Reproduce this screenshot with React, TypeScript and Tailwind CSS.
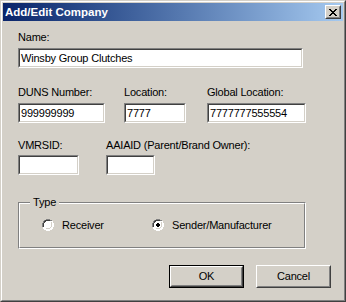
import React from "react";

const font = { fontFamily: '"Liberation Sans", Arial, sans-serif' };

function Sunken({ w, value }: { w: string; value?: string }) {
  return (
    <div className={`${w} h-[20px] border border-t-[#808080] border-l-[#808080] border-r-white border-b-white`}>
      <div className="h-full border border-t-[#404040] border-l-[#404040] border-r-[#d4d0c8] border-b-[#d4d0c8] bg-white pl-[1px] text-[11px] leading-[16px] text-black">
        {value}
      </div>
    </div>
  );
}

function Radio({ checked }: { checked?: boolean }) {
  return (
    <svg width="12" height="12" viewBox="0 0 12 12" className="shrink-0">
      <path d="M4 0h4v1h2v1h1v2h1v4h-1v2h-1v1h-2v1h-4v-1h-2v-1h-1v-2h-1v-4h1v-2h1v-1h2z" fill="#ffffff" />
      <path d="M4 0h4v1h2v1h-2v-1h-4v1h-2v2h-1v4h-1v-4h1v-2h1v-1h2z" fill="#808080" />
      <path d="M4 1h4v1h-4v1h-1v1h-1v4h-1v-4h1v-2h1v-1z" fill="#404040" />
      <path d="M10 2h1v2h1v4h-1v2h-1v1h-2v1h-4v-1h4v-1h2v-2h1v-4h-1z" fill="#ffffff" />
      <path d="M9 3h1v1h0v4h-1v1h-1v1h-4v-1h4v-1h1v-4z" fill="#d4d0c8" />
      {checked && <path d="M5 4h2v1h1v2h-1v1h-2v-1h-1v-2h1z" fill="#000000" />}
    </svg>
  );
}

function Button({ label, def }: { label: string; def?: boolean }) {
  const inner = (
    <div className="h-full border border-t-white border-l-white border-r-[#404040] border-b-[#404040]">
      <div className="h-full border border-t-[#d4d0c8] border-l-[#d4d0c8] border-r-[#808080] border-b-[#808080] flex items-center justify-center text-[11px] text-black">
        {label}
      </div>
    </div>
  );
  return def ? (
    <div className="w-[75px] h-[23px] border border-black">{inner}</div>
  ) : (
    <div className="w-[75px] h-[23px]">{inner}</div>
  );
}

export default function App() {
  return (
    <div style={font} className="w-[346px] h-[302px] bg-[#d4d0c8]">
      <div className="w-full h-full border border-t-[#d4d0c8] border-l-[#d4d0c8] border-r-[#404040] border-b-[#404040]">
        <div className="w-full h-full border border-t-white border-l-white border-r-[#808080] border-b-[#808080] p-[1px] flex flex-col">
          {/* title bar */}
          <div className="h-[18px] flex items-center justify-between bg-gradient-to-r from-[#0a246a] to-[#a6caf0] pl-[2px] pr-[2px]">
            <span className="text-white font-bold text-[11.5px] leading-[18px]">Add/Edit Company</span>
            <div className="w-[16px] h-[14px] border border-t-white border-l-white border-r-[#404040] border-b-[#404040]">
              <div className="w-full h-full bg-[#d4d0c8] border border-t-[#d4d0c8] border-l-[#d4d0c8] border-r-[#808080] border-b-[#808080] flex items-center justify-center">
                <svg width="8" height="7" viewBox="0 0 8 7">
                  <path d="M0 0h2v1h1v1h2v-1h1v-1h2v1h-1v1h-1v1h-1v1h1v1h1v1h1v1h-2v-1h-1v-1h-2v1h-1v1h-2v-1h1v-1h1v-1h1v-1h-1v-1h-1v-1h-1z" fill="#000" />
                </svg>
              </div>
            </div>
          </div>

          {/* body */}
          <div className="flex-1 pl-[15px] text-[11px] leading-[13px] tracking-[-0.2px] text-black">
            <div className="mt-[10px]">Name:</div>
            <div className="mt-[4px]">
              <Sunken w="w-[285px]" value="Winsby Group Clutches" />
            </div>

            <div className="mt-[18px] flex">
              <div className="w-[106px]">
                <div>DUNS Number:</div>
                <div className="mt-[4px]"><Sunken w="w-[87px]" value="999999999" /></div>
              </div>
              <div className="w-[83px]">
                <div>Location:</div>
                <div className="mt-[4px]"><Sunken w="w-[62px]" value="7777" /></div>
              </div>
              <div>
                <div>Global Location:</div>
                <div className="mt-[4px]"><Sunken w="w-[99px]" value="7777777555554" /></div>
              </div>
            </div>

            <div className="mt-[16px] flex">
              <div className="w-[88px]">
                <div>VMRSID:</div>
                <div className="mt-[3px]"><Sunken w="w-[61px]" /></div>
              </div>
              <div>
                <div>AAIAID (Parent/Brand Owner):</div>
                <div className="mt-[3px]"><Sunken w="w-[49px]" /></div>
              </div>
            </div>

            {/* group box */}
            <div className="relative mt-[27px] w-[288px] h-[47px] border border-t-[#808080] border-l-[#808080] border-r-white border-b-white">
              <div className="h-full border border-t-white border-l-white border-r-[#808080] border-b-[#808080] pl-[22px] pt-[15px] flex items-start">
                <div className="w-[110px] h-[12px] flex items-center gap-[8px]">
                  <Radio />
                  <span>Receiver</span>
                </div>
                <div className="h-[12px] flex items-center gap-[8px]">
                  <Radio checked />
                  <span>Sender/Manufacturer</span>
                </div>
              </div>
              <div className="absolute left-[11px] top-[-7px] px-[3px] bg-[#d4d0c8] leading-[13px]">Type</div>
            </div>

            <div className="mt-[16px] flex justify-end gap-[12px] pr-[12px]">
              <Button label="OK" def />
              <Button label="Cancel" />
            </div>
          </div>
        </div>
      </div>
    </div>
  );
}
